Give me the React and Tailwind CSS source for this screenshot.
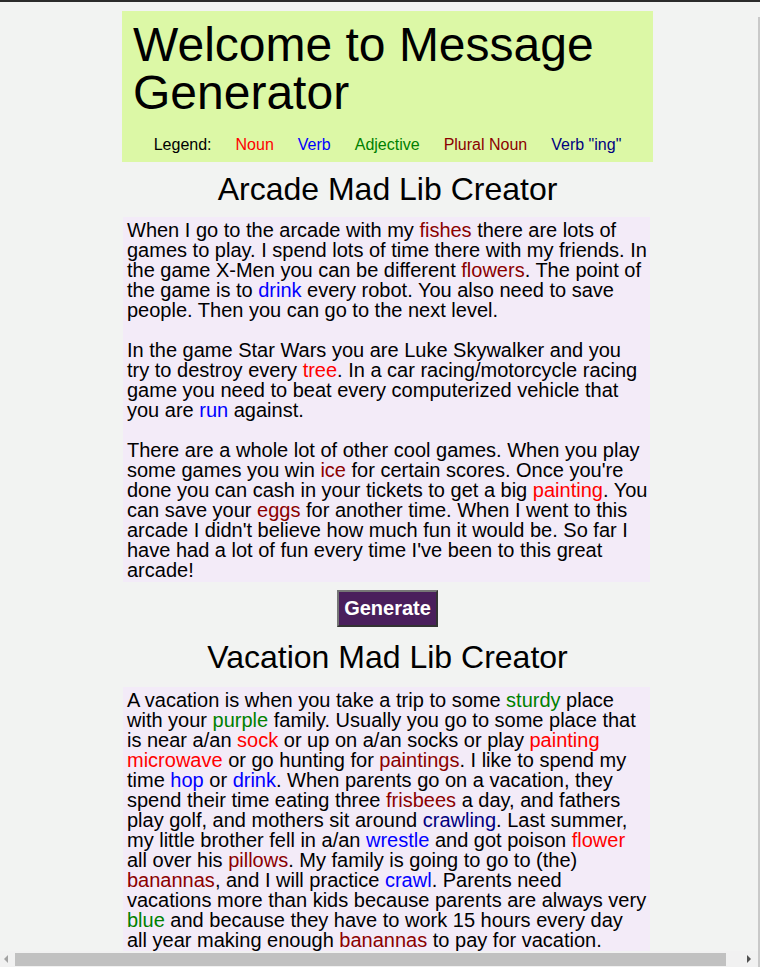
import React from "react";

const N = ({ children }) => <span className="text-[#ff0000]">{children}</span>;
const V = ({ children }) => <span className="text-[#0000ff]">{children}</span>;
const A = ({ children }) => <span className="text-[#008000]">{children}</span>;
const P = ({ children }) => <span className="text-[#8b0000]">{children}</span>;
const G = ({ children }) => <span className="text-[#000080]">{children}</span>;

function Heading({ children, className }) {
  return (
    <h2 className={"text-center text-[32px] leading-[37px] font-normal " + className}>
      {children}
    </h2>
  );
}

export default function App() {
  return (
    <div className="min-h-screen bg-[#f2f3f2] border-t-2 border-[#2b2b2b] font-['Liberation_Sans',Arial,sans-serif] text-black pb-10">
      <div className="w-[531px] ml-[122px] pt-[9px]">
        <header className="bg-[#dcf8a6] pt-[10px] pb-[8px]">
          <h1 className="pl-[11px] text-[48px] leading-[48px] font-normal">
            Welcome to Message
            <br />
            Generator
          </h1>
          <div className="mt-[19px] flex justify-center gap-6 text-[16px] leading-[normal]">
            <span>Legend:</span>
            <N>Noun</N>
            <V>Verb</V>
            <A>Adjective</A>
            <P>Plural Noun</P>
            <G>Verb "ing"</G>
          </div>
        </header>

        <Heading className="mt-[9px] mb-[9px]">Arcade Mad Lib Creator</Heading>

        <div className="ml-px w-[527px] bg-[#f3ebf8] pl-1 pt-[3px] pb-[2px] text-[20px] leading-[20px] whitespace-nowrap">
          <p className="mb-5">
            When I go to the arcade with my <P>fishes</P> there are lots of
            <br />
            games to play. I spend lots of time there with my friends. In
            <br />
            the game X-Men you can be different <P>flowers</P>. The point of
            <br />
            the game is to <V>drink</V> every robot. You also need to save
            <br />
            people. Then you can go to the next level.
          </p>
          <p className="mb-5">
            In the game Star Wars you are Luke Skywalker and you
            <br />
            try to destroy every <N>tree</N>. In a car racing/motorcycle racing
            <br />
            game you need to beat every computerized vehicle that
            <br />
            you are <V>run</V> against.
          </p>
          <p>
            There are a whole lot of other cool games. When you play
            <br />
            some games you win <P>ice</P> for certain scores. Once you're
            <br />
            done you can cash in your tickets to get a big <N>painting</N>. You
            <br />
            can save your <P>eggs</P> for another time. When I went to this
            <br />
            arcade I didn't believe how much fun it would be. So far I
            <br />
            have had a lot of fun every time I've been to this great
            <br />
            arcade!
          </p>
        </div>

        <div className="mt-2 flex justify-center">
          <button className="bg-[#4a1f5c] text-white font-bold text-[20px] leading-[23px] px-[5px] py-[5px] border-2 border-solid border-[#333333] border-t-[#767676] border-l-[#767676]">
            Generate
          </button>
        </div>

        <Heading className="mt-3 mb-[11px]">Vacation Mad Lib Creator</Heading>

        <div className="ml-px w-[527px] bg-[#f3ebf8] pl-1 pt-[3px] pb-[2px] text-[20px] leading-[20px] whitespace-nowrap">
          <p>
            A vacation is when you take a trip to some <A>sturdy</A> place
            <br />
            with your <A>purple</A> family. Usually you go to some place that
            <br />
            is near a/an <N>sock</N> or up on a/an socks or play <N>painting</N>
            <br />
            <N>microwave</N> or go hunting for <P>paintings</P>. I like to spend my
            <br />
            time <V>hop</V> or <V>drink</V>. When parents go on a vacation, they
            <br />
            spend their time eating three <P>frisbees</P> a day, and fathers
            <br />
            play golf, and mothers sit around <G>crawling</G>. Last summer,
            <br />
            my little brother fell in a/an <V>wrestle</V> and got poison <N>flower</N>
            <br />
            all over his <P>pillows</P>. My family is going to go to (the)
            <br />
            <P>banannas</P>, and I will practice <V>crawl</V>. Parents need
            <br />
            vacations more than kids because parents are always very
            <br />
            <A>blue</A> and because they have to work 15 hours every day
            <br />
            all year making enough <P>banannas</P> to pay for vacation.
          </p>
        </div>
      </div>

      {/* window edge line */}
      <div className="fixed top-[17px] bottom-0 left-[758px] w-[2px] bg-[#c9c9c9]" />

      {/* horizontal scrollbar */}
      <div className="fixed bottom-0 left-0 w-[758px] h-4 bg-[#f1f1f1]">
        <svg className="absolute left-[3px] top-[4px]" width="6" height="8" viewBox="0 0 6 8">
          <polygon points="5,0 5,8 1,4" fill="#a3a3a3" />
        </svg>
        <div className="absolute left-[15px] top-[2px] w-[711px] h-[13px] bg-[#c1c1c1]" />
        <svg className="absolute left-[746px] top-[4px]" width="6" height="8" viewBox="0 0 6 8">
          <polygon points="1,0 1,8 5,4" fill="#505050" />
        </svg>
      </div>
    </div>
  );
}
